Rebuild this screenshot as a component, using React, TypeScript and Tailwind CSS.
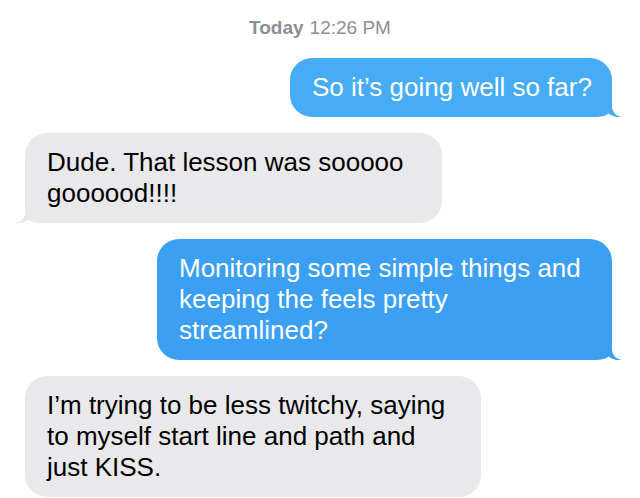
import React from 'react'

type Msg = {
  from: 'me' | 'them'
  lines: string[]
  width: string
  color?: string
  tail: boolean
}

const messages: Msg[] = [
  { from: 'me', lines: ['So it’s going well so far?'], width: 'w-[322px]', color: '#47acf6', tail: true },
  { from: 'them', lines: ['Dude. That lesson was sooooo', 'goooood!!!!'], width: 'w-[417px]', tail: true },
  {
    from: 'me',
    lines: ['Monitoring some simple things and', 'keeping the feels pretty', 'streamlined?'],
    width: 'w-[455px]',
    color: '#3ba0f3',
    tail: true,
  },
  {
    from: 'them',
    lines: ['I’m trying to be less twitchy, saying', 'to myself start line and path and', 'just KISS.'],
    width: 'w-[456px]',
    tail: false,
  },
]

function Tail({ side, color }: { side: 'left' | 'right'; color: string }) {
  if (side === 'right') {
    return (
      <svg className="absolute bottom-0 right-[-10px]" width="32" height="24" viewBox="0 0 32 24">
        <path d="M0 0 H22 V13 C22 19 26 23 32 24 C27 24.6 22 23.4 18.5 20.5 C15 23.2 11 24 6 24 H0 Z" fill={color} />
      </svg>
    )
  }
  return (
    <svg className="absolute bottom-0 left-[-10px]" width="32" height="24" viewBox="0 0 32 24">
      <path d="M32 0 H10 V13 C10 19 6 23 0 24 C5 24.6 10 23.4 13.5 20.5 C17 23.2 21 24 26 24 H32 Z" fill={color} />
    </svg>
  )
}

function Bubble({ msg }: { msg: Msg }) {
  const mine = msg.from === 'me'
  const bg = mine ? msg.color ?? '#3ba0f3' : '#e9e9eb'
  return (
    <div
      className={`relative rounded-[22px] px-[22px] py-[14px] text-[26px] leading-[31px] ${msg.width} ${
        mine ? 'mr-[28px] self-end text-white' : 'ml-[25px] self-start text-black'
      }`}
      style={{ backgroundColor: bg }}
    >
      {msg.tail && <Tail side={mine ? 'right' : 'left'} color={bg} />}
      <div className="relative whitespace-nowrap">
        {msg.lines.map((line) => (
          <div key={line}>{line}</div>
        ))}
      </div>
    </div>
  )
}

export default function App() {
  return (
    <div className="h-[498px] w-[640px] overflow-hidden bg-white font-['Liberation_Sans',Arial,sans-serif]">
      <div className="flex h-[58px] items-center justify-center pb-[2px] text-[19px] text-[#8e8e93]">
        <span className="font-semibold">Today</span>
        <span className="ml-[6px]">12:26 PM</span>
      </div>
      <div className="flex flex-col gap-4">
        {messages.map((m) => (
          <Bubble key={m.lines[0]} msg={m} />
        ))}
      </div>
    </div>
  )
}
